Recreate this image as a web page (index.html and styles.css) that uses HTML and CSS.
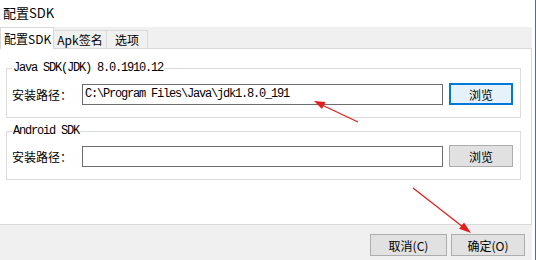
FILE: index.html
```html
<!DOCTYPE html>
<html lang="zh-CN">
<head>
    <meta charset="UTF-8">
    <title>配置SDK</title>
    <link rel="stylesheet" href="styles.css">
</head>
<body>
    <div class="window">
        <div class="titlebar">配置SDK</div>
        <div class="client">
            <div class="tabs">
                <div class="tab active">配置SDK</div>
                <div class="tab">Apk签名</div>
                <div class="tab">选项</div>
            </div>
            <div class="page">
                <fieldset class="group first">
                    <legend class="mono">Java SDK(JDK) 8.0.1910.12</legend>
                    <div class="row">
                        <label class="label">安装路径：</label>
                        <div class="input mono">C:\Program Files\Java\jdk1.8.0_191</div>
                        <button class="btn default">浏览</button>
                    </div>
                </fieldset>
                <fieldset class="group second">
                    <legend class="mono">Android SDK</legend>
                    <div class="row">
                        <label class="label">安装路径：</label>
                        <div class="input mono"></div>
                        <button class="btn">浏览</button>
                    </div>
                </fieldset>
            </div>
            <div class="footer">
                <button class="btn cancel">取消(C)</button>
                <button class="btn ok">确定(O)</button>
            </div>
        </div>
    </div>

    <!-- red annotation arrows drawn over the dialog -->
    <svg class="arrows" width="536" height="260" viewBox="0 0 536 260">
        <line x1="358" y1="122" x2="322" y2="105" stroke="#e0201c" stroke-width="1.3"/>
        <polygon points="314,101 325.5,102 321.9,109" fill="#e0201c"/>
        <line x1="413" y1="188" x2="463" y2="227" stroke="#e0201c" stroke-width="1.3"/>
        <polygon points="471,233 459.1,228.8 464,222.5" fill="#e0201c"/>
    </svg>
</body>
</html>
```

FILE: styles.css
```css
html, body {
    margin: 0;
    padding: 0;
    background: #fff;
}
body {
    width: 536px;
    height: 260px;
    overflow: hidden;
    position: relative;
    font-family: "Noto Sans CJK SC", "Liberation Sans", sans-serif;
    font-size: 12px;
    color: #000;
}
.window {
    box-sizing: border-box;
    width: 536px;
    height: 260px;
    padding-right: 3px;
    border-right: 1px solid #1f7bd0;
}
.titlebar {
    height: 27px;
    line-height: 25px;
    padding-left: 3px;
    font-size: 13px;
}
.client {
    width: 532px;
    height: 233px;
    background: #f0f0f0;
}
.mono {
    font-family: "Liberation Mono", "DejaVu Sans Mono", monospace;
    font-size: 12px;
    letter-spacing: -1.2px;
}

/* tabs */
.tabs {
    display: flex;
    align-items: flex-end;
    height: 22px;
    margin-bottom: -1px;
    position: relative;
    z-index: 1;
}
.tab {
    box-sizing: border-box;
    height: 19px;
    border: 1px solid #d9d9d9;
    background: #f0f0f0;
    display: flex;
    align-items: center;
    justify-content: center;
    margin-left: -1px;
    width: 54px;
}
.tab:last-child {
    width: 42px;
}
.tab.active {
    height: 22px;
    margin-left: 0;
    background: #fff;
    border-bottom: none;
    justify-content: flex-start;
    padding-left: 3px;
    position: relative;
    z-index: 2;
}

/* tab page */
.page {
    box-sizing: border-box;
    height: 177px;
    background: #fff;
    border: 1px solid #d9d9d9;
    border-left: none;
    padding-top: 13px;
}
.group {
    box-sizing: border-box;
    width: 515px;
    margin: 0 0 0 6px;
    padding: 9px 7px 12px 5px;
    border: 1px solid #dcdcdc;
    min-inline-size: 0;
}
.group.second {
    margin-top: 7px;
    padding-top: 8px;
}
.group legend {
    padding: 0 1px;
    line-height: 12px;
    height: 12px;
}
.row {
    display: flex;
    align-items: center;
    height: 22px;
}
.label {
    width: 70px;
    flex: none;
}
.input {
    box-sizing: border-box;
    width: 361px;
    height: 21px;
    border: 1px solid #6d6d6d;
    padding: 0 2px;
    line-height: 19px;
    white-space: nowrap;
}

/* buttons */
.btn {
    box-sizing: border-box;
    height: 22px;
    margin: 0;
    padding: 0;
    border: 1px solid #adadad;
    background: #e1e1e1;
    font-family: "Noto Sans CJK SC", "Liberation Sans", sans-serif;
    font-size: 12px;
    color: #000;
}
.row .btn {
    width: 64px;
    margin-left: 6px;
}
.btn.default {
    border: 2px solid #0078d7;
    background: #e5f1fb;
}
.footer {
    display: flex;
    justify-content: flex-end;
    gap: 4px;
    padding: 9px 7px 0 0;
}
.btn.cancel {
    width: 77px;
}
.btn.ok {
    width: 74px;
}

.arrows {
    position: absolute;
    left: 0;
    top: 0;
    pointer-events: none;
}
```
